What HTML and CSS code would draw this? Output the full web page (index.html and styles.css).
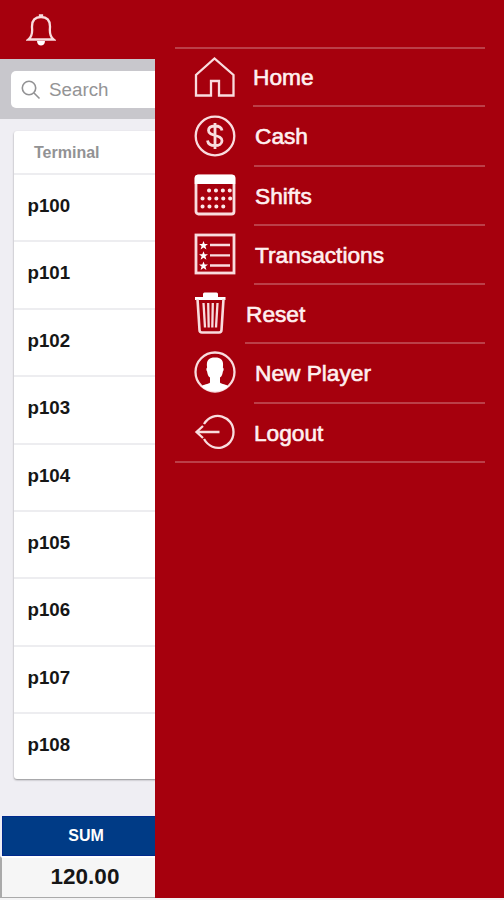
FILE: index.html
```html
<!DOCTYPE html>
<html lang="en">
<head>
<meta charset="utf-8">
<title>Terminals</title>
<link rel="stylesheet" href="styles.css">
</head>
<body>
<div class="app">
  <main class="page">
    <header class="topbar">
      <svg class="bell" width="30" height="34" viewBox="0 0 30 34"><path d="M2.500 26.500c5-4 3.500-9 3.500-13C6 7 9 4 15 4s9 3 9 9.500c0 4-1.500 9 3.500 13z"/><path d="M14 4V2.500h2V4"/><path class="solid" d="M11 28h8c0 6-8 6-8 0z"/></svg>
    </header>
    <div class="searchbar">
      <div class="search">
        <svg class="glass" width="20" height="20" viewBox="0 0 20 20"><circle cx="8" cy="8" r="6.700"/><path d="M13 13l5.500 5.500"/></svg>
        <span>Search</span>
      </div>
    </div>
    <section class="card">
      <div class="head">Terminal</div>
      <div class="row">p100</div>
      <div class="row">p101</div>
      <div class="row">p102</div>
      <div class="row">p103</div>
      <div class="row">p104</div>
      <div class="row">p105</div>
      <div class="row">p106</div>
      <div class="row">p107</div>
      <div class="row">p108</div>
    </section>
    <footer class="total">
      <div class="total-label">SUM</div>
      <div class="total-value">120.00</div>
    </footer>
  </main>
  <nav class="drawer">
    <ul class="menu">
      <li class="item">
        <svg width="42" height="42" viewBox="0 0 42 42"><path d="M2 39.500V19L20.500 2.500 39.500 19v20.500H25V25h-8v14.500z"/></svg>
        <span class="label home">Home</span>
      </li>
      <li class="item">
        <svg width="42" height="42" viewBox="0 0 42 42"><circle cx="21" cy="21" r="19.300"/><path class="dollar" d="M28 15.500c-.5-3-3-4.500-7-4.500-4 0-6.500 1.800-6.500 4.600 0 6.400 13.500 3.400 13.500 10.200 0 3-2.800 4.900-7 4.900-4.400 0-7-2-7.500-5.200M21 8v26"/></svg>
        <span class="label">Cash</span>
      </li>
      <li class="item">
        <svg class="raised" width="42" height="42" viewBox="0 0 42 42"><rect x="2" y="2" width="38" height="38" rx="2.500" stroke-width="2.800"/><path class="solid" d="M.7 10V4q0-3.300 3.300-3.300h34q3.300 0 3.300 3.300v6z"/><g class="dots"><path d="M15 16.500h22M8.500 24.500h28M8.500 32.500h22"/></g></svg>
        <span class="label">Shifts</span>
      </li>
      <li class="item">
        <svg class="raised" width="42" height="42" viewBox="0 0 42 42"><rect class="sheet" x="2" y="2" width="38" height="38"/><path d="M16 12h20M16 22.300h20M16 32.500h20"/><g class="solid"><path id="star" d="M9.500 8l1.200 3h3.300l-2.600 2.100 1 3.400-2.900-2-2.900 2 1-3.400L5 11h3.300z"/><use href="#star" y="10.200"/><use href="#star" y="20.400"/></g></svg>
        <span class="label">Transactions</span>
      </li>
      <li class="item">
        <svg class="raised" width="33" height="42" viewBox="0 0 33 42"><path class="solid" d="M1 5h8V2q0-1.500 1.500-1.500h12Q24 .5 24 2v3h7.500v3H1z"/><path class="can" d="M3.500 7l2 31q.1 2.500 2.500 2.500h17q2.400 0 2.500-2.500l2-31"/><path class="ribs" d="M9.500 11l1.500 24.500M14.200 11l.5 24.500M18.800 11l-.5 24.500M23.500 11L22 35.500"/></svg>
        <span class="label">Reset</span>
      </li>
      <li class="item">
        <svg class="raised" width="42" height="42" viewBox="0 0 42 42"><circle cx="21" cy="21" r="19.500"/><path class="solid" d="M7.500 35.500c2-2.500 7-2 8.500-4v-5c-2-1-2.500-4-2.900-6-1-1-1-3.500 0-4C12 9 15 6.500 21 6.500s9 2.500 7.900 10c1 .5 1 3 0 4-.4 2-.9 5-2.900 6v5c1.500 2 6.500 1.500 8.500 4-7.500 6.500-19.500 6.500-27 0z"/></svg>
        <span class="label">New Player</span>
      </li>
      <li class="item">
        <svg class="raised" width="42" height="42" viewBox="0 0 42 42"><path d="M10 13C19-1.500 39.500 5 39.500 21S19 43.500 10 28"/><path d="M25.500 21H2.500M9 15l-6.500 6L9 27"/></svg>
        <span class="label exit">Logout</span>
      </li>
    </ul>
  </nav>
</div>
</body>
</html>
```
FILE: styles.css
```css
* { box-sizing: border-box; }
body {
  margin: 0;
  background: #f4f4f5;
  font-family: "Liberation Sans", Arial, sans-serif;
}
.app {
  display: flex;
  width: 504px;
  height: 898px;
  overflow: hidden;
}
.page {
  display: flex;
  flex-direction: column;
  width: 155px;
  background: #efeef3;
  overflow: hidden;
}
.topbar {
  height: 59px;
  padding: 13px 0 0 26px;
  background: #a6000d;
}
svg {
  display: block;
  flex: none;
  fill: none;
  stroke: #f9dcde;
  stroke-width: 2.3;
}
.solid { fill: #fff; stroke: none; }
.searchbar {
  height: 60px;
  padding: 12px 0 0 11px;
  background: #c8c7cc;
}
.search {
  display: flex;
  align-items: center;
  gap: 8px;
  width: 200px;
  height: 37px;
  padding-left: 10px;
  border-radius: 5px;
  background: #fff;
  color: #949496;
  font-size: 18.8px;
}
.glass { stroke: #929294; stroke-width: 1.6; }
.card {
  width: 200px;
  height: 648px;
  margin: 12px 0 0 14px;
  background: #fff;
  border-radius: 3px;
  box-shadow: 0 1px 2px rgba(0, 0, 0, .4);
}
.head {
  height: 42px;
  padding-left: 20px;
  line-height: 43px;
  color: #929294;
  font-size: 16px;
  font-weight: bold;
}
.row {
  height: 67.4px;
  padding-left: 13.5px;
  border-top: 2px solid #ededf0;
  line-height: 61px;
  color: #161616;
  font-size: 18.7px;
  font-weight: bold;
}
.total {
  margin-top: auto;
  text-align: center;
  font-weight: bold;
}
.total-label {
  height: 40px;
  margin-left: 2px;
  padding-left: 14px;
  background: #003b86;
  border: 1px solid #00298c;
  border-right: 0;
  color: #fff;
  font-size: 16px;
  line-height: 37px;
}
.total-value {
  height: 42px;
  padding-left: 13px;
  border: solid #aaa;
  border-width: 2px 0 1px 2px;
  border-top-color: #fff;
  background: #f6f6f6;
  color: #161616;
  font-size: 22.5px;
  line-height: 38px;
}
.drawer {
  flex: 1;
  padding: 47px 19px 0 20px;
  background: #a6000d;
}
.menu {
  margin: 0;
  padding: 0;
  list-style: none;
  border-top: 2px solid #bb3f48;
  border-bottom: 2px solid #bb3f48;
}
.item {
  display: flex;
  align-items: flex-start;
  gap: 18px;
  height: 59.3px;
  padding: 7px 0 0 19px;
}
.item:last-child { height: 56.7px; }
.raised { margin-top: -1px; }
.label {
  flex: 1;
  height: 52.3px;
  margin-top: -1px;
  padding-left: 1px;
  border-bottom: 2px solid #bb3f48;
  color: #fff0f0;
  font-size: 22.7px;
  line-height: 45px;
  -webkit-text-stroke: .6px #fff0f0;
}
.home { margin-left: -1px; padding-left: 0; }
.exit { padding-left: 0; border-bottom: 0; }
.item:first-child .label { line-height: 44px; }
.dollar { stroke-width: 2.8; }
.sheet { stroke-width: 2.8; }
.can { stroke-width: 2.6; }
.dots {
  stroke: #fbe6e7;
  stroke-width: 4;
  stroke-linecap: round;
}
.dots path { stroke-dasharray: .1 6.8; }
.ribs { stroke-width: 2.3; }
```
